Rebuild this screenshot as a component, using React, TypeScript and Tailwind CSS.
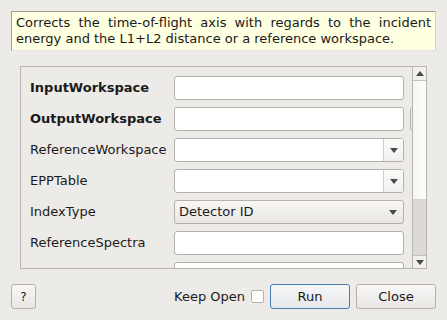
import React from "react";

const Arrow = ({ up = false }: { up?: boolean }) => (
  <svg width="8" height="5" viewBox="0 0 8 5" className="block">
    <path d={up ? "M0 5 L4 0 L8 5 Z" : "M0 0 L8 0 L4 5 Z"} fill="#4a4a48" />
  </svg>
);

const TextField = () => (
  <div className="h-[24px] w-[230px] shrink-0 rounded-[3px] border border-[#b4b1ac] bg-white" />
);

const EditCombo = () => (
  <div className="flex h-[24px] w-[230px] shrink-0 rounded-[3px] border border-[#b4b1ac] bg-white">
    <div className="flex-1" />
    <div className="flex w-[20px] items-center justify-center border-l border-[#cfcdc9] bg-gradient-to-b from-[#fbfbfa] to-[#f1f0ee]">
      <Arrow />
    </div>
  </div>
);

const Combo = ({ value }: { value: string }) => (
  <div className="flex h-[24px] w-[230px] shrink-0 items-center justify-between rounded-[3px] border border-[#b4b1ac] bg-gradient-to-b from-[#f8f7f6] to-[#e9e7e4] pl-[4px] pr-[6px]">
    <span>{value}</span>
    <Arrow />
  </div>
);

const rows: { label: string; bold?: boolean; field: React.ReactNode; browse?: boolean }[] = [
  { label: "InputWorkspace", bold: true, field: <TextField /> },
  { label: "OutputWorkspace", bold: true, field: <TextField />, browse: true },
  { label: "ReferenceWorkspace", field: <EditCombo /> },
  { label: "EPPTable", field: <EditCombo /> },
  { label: "IndexType", field: <Combo value="Detector ID" /> },
  { label: "ReferenceSpectra", field: <TextField /> },
  { label: "", field: <TextField /> },
];

export default function App() {
  return (
    <div
      className="flex h-[320px] w-[447px] flex-col overflow-hidden bg-[#edebe8] text-[13px] text-[#1a1a1a]"
      style={{ fontFamily: '"DejaVu Sans", "Liberation Sans", sans-serif' }}
    >
      {/* description */}
      <div className="mx-[11px] mt-[11px] h-[40px] border border-[#9f9d99] border-r-[#d3d1cd] border-b-[#e4e2de] bg-[#ffffe1] px-[4px] pt-[3px] leading-[16px]">
        <div className="text-justify [text-align-last:justify]">
          Corrects the time-of-flight axis with regards to the incident
        </div>
        <div>energy and the L1+L2 distance or a reference workspace.</div>
      </div>

      {/* properties panel */}
      <div className="ml-[20px] mt-[15px] flex h-[203px] w-[407px] border border-[#b8b5b0]">
        <div className="min-w-0 flex-1 overflow-hidden pl-[9px] pt-[9px]">
          <div className="flex flex-col gap-[7px]">
            {rows.map((r, i) => (
              <div key={i} className="flex h-[24px] items-center">
                <div className={`w-[144px] shrink-0 whitespace-nowrap ${r.bold ? "font-bold" : ""}`}>
                  {r.label}
                </div>
                {r.field}
                {r.browse && (
                  <div className="ml-[6px] h-[24px] w-[30px] shrink-0 rounded-[3px] border border-[#b4b1ac] bg-[#f3f2f0]" />
                )}
              </div>
            ))}
          </div>
        </div>
        {/* scrollbar */}
        <div className="flex w-[14px] shrink-0 flex-col border-l border-[#b8b5b0]">
          <div className="flex h-[14px] items-center justify-center border-b border-[#c4c1bc] bg-[#f1f0ee]">
            <Arrow up />
          </div>
          <div className="h-[119px] border-b border-[#d4d2ce] bg-gradient-to-r from-[#f7f6f5] to-[#fdfdfc]" />
          <div className="flex-1 bg-[#dcdad6]" />
          <div className="flex h-[13px] items-center justify-center border-t border-[#c4c1bc] bg-[#f1f0ee]">
            <Arrow />
          </div>
        </div>
      </div>

      {/* buttons */}
      <div className="mt-[15px] flex items-center justify-between px-[11px]">
        <button className="flex h-[25px] w-[25px] items-center justify-center rounded-[3px] border border-[#b4b1ac] bg-gradient-to-b from-[#f8f7f6] to-[#e9e7e4] text-[12px]">
          ?
        </button>
        <div className="flex items-center">
          <span>Keep Open</span>
          <div className="ml-[6px] h-[13px] w-[13px] rounded-[2px] border border-[#b4b1ac] bg-white" />
          <button className="ml-[6px] flex h-[25px] w-[80px] items-center justify-center rounded-[3px] border border-[#4a7fb5] bg-gradient-to-b from-[#f6f7f8] to-[#e4e7ea]">
            Run
          </button>
          <button className="ml-[6px] flex h-[25px] w-[80px] items-center justify-center rounded-[3px] border border-[#b4b1ac] bg-gradient-to-b from-[#f8f7f6] to-[#e9e7e4]">
            Close
          </button>
        </div>
      </div>
    </div>
  );
}
